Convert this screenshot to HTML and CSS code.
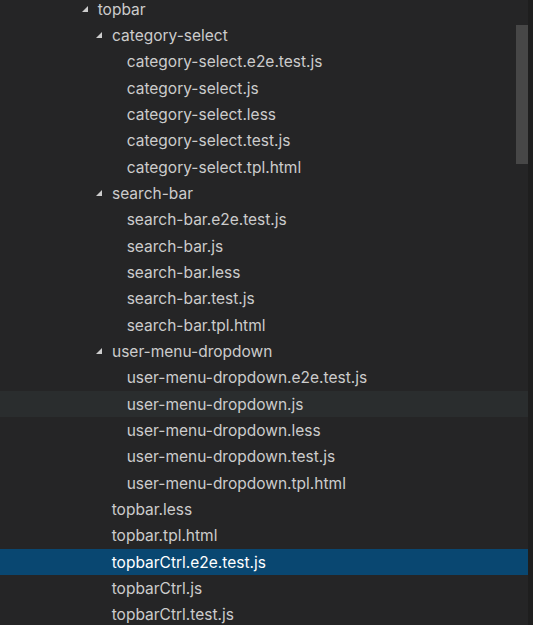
FILE: index.html
```html
<!DOCTYPE html>
<html>
<head>
<meta charset="utf-8">
<link rel="stylesheet" href="styles.css">
</head>
<body>
<div class="panel">
  <div class="view">
    <div class="tree">
      <div class="row l0"><span class="twist"></span><span class="label">topbar</span></div>
      <div class="row l1"><span class="twist"></span><span class="label">category-select</span></div>
      <div class="row l2"><span class="label">category-select.e2e.test.js</span></div>
      <div class="row l2"><span class="label">category-select.js</span></div>
      <div class="row l2"><span class="label">category-select.less</span></div>
      <div class="row l2"><span class="label">category-select.test.js</span></div>
      <div class="row l2"><span class="label">category-select.tpl.html</span></div>
      <div class="row l1"><span class="twist"></span><span class="label">search-bar</span></div>
      <div class="row l2"><span class="label">search-bar.e2e.test.js</span></div>
      <div class="row l2"><span class="label">search-bar.js</span></div>
      <div class="row l2"><span class="label">search-bar.less</span></div>
      <div class="row l2"><span class="label">search-bar.test.js</span></div>
      <div class="row l2"><span class="label">search-bar.tpl.html</span></div>
      <div class="row l1"><span class="twist"></span><span class="label">user-menu-dropdown</span></div>
      <div class="row l2"><span class="label">user-menu-dropdown.e2e.test.js</span></div>
      <div class="row l2 hover"><span class="label">user-menu-dropdown.js</span></div>
      <div class="row l2"><span class="label">user-menu-dropdown.less</span></div>
      <div class="row l2"><span class="label">user-menu-dropdown.test.js</span></div>
      <div class="row l2"><span class="label">user-menu-dropdown.tpl.html</span></div>
      <div class="row l1"><span class="label">topbar.less</span></div>
      <div class="row l1"><span class="label">topbar.tpl.html</span></div>
      <div class="row l1 selected"><span class="label">topbarCtrl.e2e.test.js</span></div>
      <div class="row l1"><span class="label">topbarCtrl.js</span></div>
      <div class="row l1"><span class="label">topbarCtrl.test.js</span></div>
    </div>
    <div class="slider"></div>
  </div>
  <div class="edge"></div>
</div>
</body>
</html>
```
FILE: styles.css
```css
html, body {
  margin: 0;
  padding: 0;
  background: #252526;
  overflow: hidden;
}
.panel {
  display: flex;
  width: 533px;
  height: 625px;
  overflow: hidden;
}
.view {
  position: relative;
  width: 528px;
  height: 625px;
  overflow: hidden;
}
.edge {
  width: 5px;
  height: 625px;
  background: #1e1e1e;
}
.tree {
  margin-top: -4px;
  font-family: Inter, "Liberation Sans", Arial, sans-serif;
  font-size: 15.5px;
  color: #cccccc;
}
.row {
  height: 26.33px;
  display: flex;
  align-items: center;
  white-space: nowrap;
}
.row.l0 { padding-left: 81.7px; }
.row.l1 { padding-left: 96px; }
.row.l2 { padding-left: 126.7px; }
.row.l1 .label:first-child { margin-left: 15.7px; }
.twist {
  width: 0;
  height: 0;
  border-left: 6px solid transparent;
  border-bottom: 6px solid #cccccc;
  margin-right: 10px;
  margin-top: -1px;
}
.hover { background: #2a2d2e; }
.selected { background: #094771; color: #ffffff; }
.slider {
  position: absolute;
  right: 0;
  top: 25px;
  width: 12px;
  height: 139px;
  background: #474747;
}
```
